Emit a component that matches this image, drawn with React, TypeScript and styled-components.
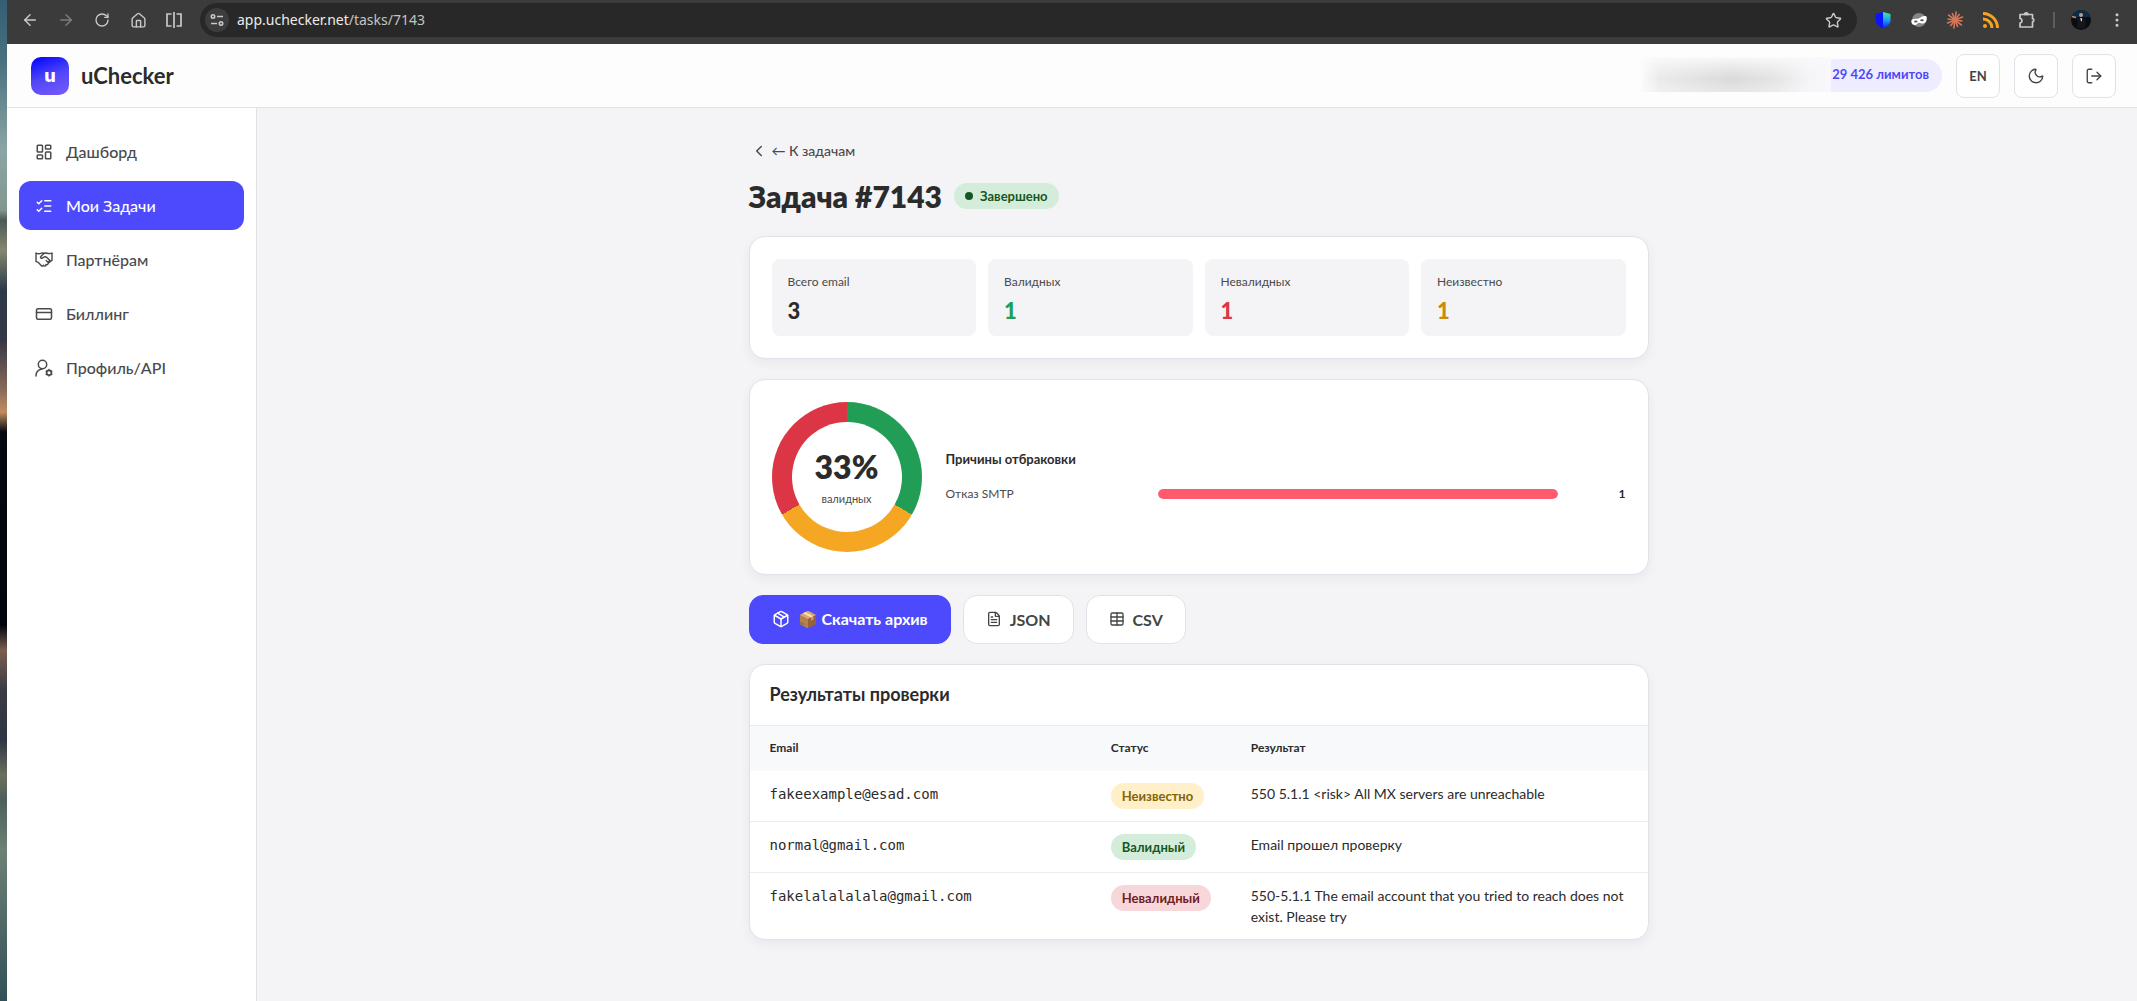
import React from "react";
import styled, { createGlobalStyle } from "styled-components";
import {
  ArrowLeft, ArrowRight, RotateCw, House, Star, EllipsisVertical, LayoutDashboard, ListChecks,
  CreditCard, ChevronLeft, Moon, Package, FileText, Table, LogOut,
} from "lucide-react";

const Global = createGlobalStyle`
  *, *::before, *::after { box-sizing: border-box; }
  body {
    margin: 0;
    background: #f4f4f7;
    color: #2b2b2b;
    font-family: Lato, "Open Sans", sans-serif;
    font-size: 16px;
  }
  h1, h2, h3, p, dl, dd, ul { margin: 0; padding: 0; }
  button, input { font-family: inherit; }
`;

const Desktop = styled.div`
  min-height: 100vh;
  display: flex;
  padding-left: 7px;
  background: linear-gradient(180deg, #335f74 0, #48707f 60px, #8ba5a5 150px, #82978f 210px, #4c5a58 220px, #84876f 250px,
    #2c3b49 290px, #343746 340px, #8a6a58 390px, #c08c5f 412px, #04090f 432px, #02050b 625px, #7a5d50 650px,
    #3b3b44 690px, #2d3642 740px, #6b6f5e 775px, #4d5f5b 800px, #6c8074 850px, #33505a 1000px) left top / 7px 100% no-repeat;
`;
const Window = styled.div`
  flex: 1;
  min-width: 0;
  display: flex;
  flex-direction: column;
`;

const Toolbar = styled.div`
  height: 44px;
  padding: 3px 8px 7px 11px;
  display: flex;
  align-items: center;
  background: #3b3b3b;
`;
const ToolButton = styled.button<{ $dim?: boolean }>`
  width: 24px;
  height: 24px;
  margin-right: 12px;
  padding: 0;
  border: 0;
  display: grid;
  place-items: center;
  background: none;
  color: ${(p) => (p.$dim ? "#7d7d7d" : "#c9c9c9")};
  &:last-child { margin-right: 0; }
`;
const AddressBar = styled.div`
  flex: 1;
  height: 34px;
  margin-left: 2px;
  margin-right: 14px;
  padding: 0 12px 0 5px;
  border-radius: 17px;
  display: flex;
  align-items: center;
  background: #282828;
`;
const SiteInfo = styled(ToolButton)`
  border-radius: 50%;
  margin-right: 8px;
  background: #3d3d3d;
`;
const Address = styled.p`
  flex: 1;
  font: 14px/20px "Noto Sans", sans-serif;
  color: #c4c4c4;
  b { font-weight: 400; color: #ececec; }
`;
const Separator = styled.span`
  width: 2px;
  height: 16px;
  margin: 0 14px 0 2px;
  background: #5d5d5d;
`;

const Header = styled.header`
  height: 64px;
  padding: 0 21px 0 24px;
  display: flex;
  align-items: center;
  border-bottom: 1px solid #e1e2e9;
  background: #fdfdfd;
`;
const Brand = styled.a`
  display: flex;
  align-items: center;
  gap: 12px;
  color: #2b2b2b;
  text-decoration: none;
  font-size: 22px;
  font-weight: 700;
  line-height: 30px;
`;
const Logo = styled.span`
  width: 38px;
  height: 38px;
  border-radius: 10px;
  display: grid;
  place-items: center;
  background: linear-gradient(160deg, #0000ff, #4f46f8 50%, #7a5cfa);
  color: #fff;
  font: 800 18px/24px Inter, sans-serif;
`;
const HeaderTools = styled.div`
  margin-left: auto;
  display: flex;
  align-items: center;
  gap: 14px;
`;
const Account = styled.div`
  display: flex;
  align-items: center;
`;
const HiddenName = styled.div`
  width: 190px;
  height: 35px;
  margin: 0 -12px 3px 0;
  position: relative;
  background:
    linear-gradient(90deg, #fbfbfb 0, rgba(250, 250, 250, 0.5) 10%, rgba(250, 250, 250, 0.3) 25%, rgba(250, 250, 250, 0) 48%,
      rgba(250, 250, 250, 0.3) 70%, rgba(249, 249, 252, 0.85) 88%, #f8f8fd 100%),
    linear-gradient(180deg, #f9f9f9, #e8e8e8 30%, #dadada 62%, #e6e6e6);
`;
const Limits = styled.span`
  height: 33px;
  padding: 0 13px;
  border-radius: 17px;
  background: #eeedff;
  color: #4f48f5;
  font-size: 13px;
  font-weight: 700;
  line-height: 31px;
`;
const SquareButton = styled.button`
  width: 44px;
  height: 44px;
  padding: 0;
  border: 1px solid #e1e2e9;
  border-radius: 8px;
  display: grid;
  place-items: center;
  background: #fff;
  color: #444;
  font-size: 13px;
  font-weight: 700;
`;

const Body = styled.div`
  flex: 1;
  display: flex;
`;
const Sidebar = styled.nav`
  width: 250px;
  flex: none;
  padding: 19px 12px;
  display: flex;
  flex-direction: column;
  gap: 5px;
  border-right: 1px solid #e1e2e9;
  background: #fff;
`;
const NavLink = styled.a<{ $active?: boolean }>`
  padding: 12px 16px;
  border-radius: 12px;
  display: flex;
  align-items: center;
  gap: 13px;
  background: ${(p) => (p.$active ? "#4d49fc" : "transparent")};
  color: ${(p) => (p.$active ? "#fff" : "#4a4a4a")};
  font-size: 16px;
  font-weight: 500;
  line-height: 25px;
  text-decoration: none;
`;

const Main = styled.main`
  flex: 1;
  min-width: 0;
  padding: 28px 28px 60px 31px;
  background: #f4f4f7;
`;
const Content = styled.div`
  max-width: 900px;
  margin: 0 auto;
  display: flex;
  flex-direction: column;
  gap: 20px;
`;
const BackLink = styled.a`
  padding-left: 1px;
  display: flex;
  align-items: center;
  gap: 4px;
  color: #4a4a4a;
  font-size: 14px;
  font-weight: 500;
  line-height: 30px;
  text-decoration: none;
`;
const TitleRow = styled.div`
  margin-top: -8px;
  padding-bottom: 2px;
  display: flex;
  align-items: center;
  gap: 12px;
`;
const Title = styled.h1`
  font-size: 30px;
  font-weight: 800;
  line-height: 36px;
`;
type Tone = "ok" | "bad" | "unknown";
const tones = {
  ok: ["#d4edda", "#155724"],
  bad: ["#f8d7da", "#721c24"],
  unknown: ["#fff0c9", "#856404"],
};
const Badge = styled.span<{ $tone: Tone }>`
  padding: 0 11px;
  border-radius: 13px;
  display: inline-flex;
  align-items: center;
  gap: 7px;
  background: ${(p) => tones[p.$tone][0]};
  color: ${(p) => tones[p.$tone][1]};
  font-size: 13px;
  font-weight: 700;
  line-height: 26px;
`;
const Dot = styled.i`
  width: 8px;
  height: 8px;
  border-radius: 50%;
  background: currentColor;
`;

const Card = styled.section`
  border: 1px solid #e1e2e9;
  border-radius: 16px;
  background: #fff;
  box-shadow: 0 4px 12px rgba(20, 20, 40, 0.05);
  overflow: hidden;
`;
const Stats = styled.dl`
  padding: 22px;
  display: grid;
  grid-template-columns: repeat(4, 1fr);
  gap: 12px;
`;
const Stat = styled.div`
  padding: 13px 16px 9px;
  border-radius: 8px;
  background: #f4f4f7;
`;
const StatLabel = styled.dt`
  color: #4a4a4a;
  font-size: 12px;
  line-height: 20px;
`;
const StatValue = styled.dd<{ $color: string }>`
  padding-top: 3px;
  color: ${(p) => p.$color};
  font-size: 22px;
  font-weight: 900;
  line-height: 32px;
`;

const Breakdown = styled.div`
  padding: 22px;
  display: flex;
  align-items: center;
  gap: 24px;
`;
const Donut = styled.div`
  width: 150px;
  height: 150px;
  flex: none;
  padding: 20px;
  border-radius: 50%;
  background: conic-gradient(#219d55 0 120deg, #f5a623 120deg 240deg, #dc3545 240deg);
`;
const DonutHole = styled.div`
  height: 100%;
  padding-bottom: 1px;
  border-radius: 50%;
  display: flex;
  flex-direction: column;
  align-items: center;
  justify-content: center;
  background: #fff;
`;
const Percent = styled.strong`
  font-size: 32px;
  font-weight: 800;
  line-height: 44px;
`;
const PercentLabel = styled.span`
  color: #4a4a4a;
  font-size: 11px;
  line-height: 20px;
`;
const Reasons = styled.div`
  flex: 1;
  min-width: 0;
  padding-bottom: 2px;
  font-size: 12px;
  line-height: 20px;
`;
const ReasonsTitle = styled.h3`
  padding-bottom: 15px;
  font-size: 13px;
  font-weight: 700;
`;
const Reason = styled.div`
  display: grid;
  grid-template-columns: 200px 1fr 56px;
  gap: 12px;
  align-items: center;
  color: #4a4a4a;
  b { color: #2b2b2b; text-align: right; }
`;
const Bar = styled.div`
  height: 10px;
  border-radius: 5px;
  background: #eee;
  overflow: hidden;
`;
const BarFill = styled.div`
  height: 100%;
  border-radius: 5px;
  background: #ff5a6e;
`;

const Actions = styled.div`
  display: flex;
  gap: 12px;
`;
const ActionButton = styled.button<{ $primary?: boolean }>`
  height: 49px;
  padding: 0 22px 1px;
  border: 1px solid ${(p) => (p.$primary ? "#4d49fc" : "#e1e2e9")};
  border-radius: 14px;
  display: flex;
  align-items: center;
  gap: 8px;
  background: ${(p) => (p.$primary ? "#4d49fc" : "#fff")};
  color: ${(p) => (p.$primary ? "#fff" : "#444")};
  font-size: 16px;
  font-weight: 700;
  white-space: nowrap;
`;

const CardTitle = styled.h2`
  padding: 14px 20px 16px;
  border-bottom: 1px solid #e9eaee;
  font-size: 18px;
  font-weight: 700;
  line-height: 30px;
`;
const Results = styled.table`
  width: 100%;
  border-collapse: collapse;
  table-layout: fixed;
  font-size: 14px;
  line-height: 21px;
  th {
    padding: 11px 20px 13px;
    background: #f8f9fb;
    font-size: 12px;
    font-weight: 700;
    text-align: left;
  }
  th:nth-child(1) { width: 38%; }
  th:nth-child(2) { width: 140px; }
  td { padding: 12px 20px; vertical-align: top; }
  tbody tr:not(:last-child) td { border-bottom: 1px solid #ececee; }
`;
const Email = styled.span`
  font-family: "DejaVu Sans Mono", monospace;
`;

const HandshakeIcon = () => (
  <svg width="18" height="18" viewBox="0 0 18 18" fill="none" stroke="currentColor" strokeWidth="1.400" strokeLinecap="round" strokeLinejoin="round">
    <path d="M1 2.200c2 1 4 .6 5.500 0 1-.4 2-.3 3 .2M17 2.200c-2.400 1-4.200.2-6-.2-1-.2-1.800 0-2.500.8L5.800 5.600c-.8.900.5 2.200 1.500 1.500l2-1.200c1-.5 1.800-.1 2.600.6l2.400 2.300c.8.900-.1 2.200-1.200 1.700" />
    <path d="M1 2.200v8.300c1.300 0 1.800.5 2.600 1.300l2.800 2.900c.9.900 1.800.4 2-.3M17 2.200v7.300c-1 .2-1.700.5-2.600 1.200" />
    <path d="M8.200 14.200c1.200 1.600 3 .8 2.800-.6M10.800 13.400c1.300.9 2.700-.2 2.300-1.500M11.200 9.600l2 2c1 .6 1.900-.3 1.600-1.200" />
  </svg>
);
const UserGearIcon = () => (
  <svg width="18" height="18" viewBox="0 0 18 18" fill="none" stroke="currentColor" strokeWidth="1.500" strokeLinecap="round">
    <circle cx="7.500" cy="5.500" r="4.200" />
    <path d="M1 17c0-3.600 2.300-6.300 6-6.900" />
    <circle cx="14" cy="13.800" r="2.400" strokeWidth="1.700" />
    <path d="M14 10.500v.4M14 16.700v.4M11.200 12.200l.3.200M16.500 15.200l.3.200M11.200 15.400l.3-.2M16.500 12.400l.3-.2" />
  </svg>
);

const nav = [
  { label: "Дашборд", icon: <LayoutDashboard size={18} /> },
  { label: "Мои Задачи", icon: <ListChecks size={18} />, active: true },
  { label: "Партнёрам", icon: <HandshakeIcon /> },
  { label: "Биллинг", icon: <CreditCard size={18} /> },
  { label: "Профиль/API", icon: <UserGearIcon /> },
];
const stats = [
  ["Всего email", "3", "#2b2b2b"],
  ["Валидных", "1", "#219d55"],
  ["Невалидных", "1", "#dc3545"],
  ["Неизвестно", "1", "#ce8b06"],
];
const rows: { email: string; tone: Tone; status: string; result: string }[] = [
  { email: "fakeexample@esad.com", tone: "unknown", status: "Неизвестно", result: "550 5.1.1 <risk> All MX servers are unreachable" },
  { email: "normal@gmail.com", tone: "ok", status: "Валидный", result: "Email прошел проверку" },
  { email: "fakelalalalala@gmail.com", tone: "bad", status: "Невалидный", result: "550-5.1.1 The email account that you tried to reach does not exist. Please try" },
];
const reasons = [{ label: "Отказ SMTP", count: 1 }];
const maxCount = Math.max(...reasons.map((r) => r.count));

const SplitIcon = () => (
  <svg width="18" height="18" viewBox="0 0 18 18" fill="none" stroke="currentColor" strokeWidth="1.700">
    <path d="M6.500 3H2v12h4.500M9 1v16M11.500 3H16v12h-4.500" />
  </svg>
);
const TuneIcon = () => (
  <svg width="14" height="14" viewBox="0 0 14 14" fill="none" stroke="currentColor" strokeWidth="1.600">
    <circle cx="3" cy="3.500" r="1.700" /><path d="M7 3.500h6M1 10.500h6" /><circle cx="11" cy="10.500" r="1.700" />
  </svg>
);
const ShieldIcon = () => (
  <svg width="16" height="18" viewBox="0 0 16 18">
    <defs><linearGradient id="shield" x1="0" y1="0" x2="0" y2="1"><stop offset="0" stopColor="#3ff09a" /><stop offset=".5" stopColor="#1b9df0" /><stop offset="1" stopColor="#0a1cff" /></linearGradient></defs>
    <path d="M8 1L.5 3v6c0 4 3.500 6.500 7.500 8.500z" fill="#0a14ff" /><path d="M8 1l7.500 2v6c0 4-3.500 6.500-7.500 8.500z" fill="url(#shield)" />
  </svg>
);
const MaskIcon = () => (
  <svg width="18" height="18" viewBox="0 0 18 18">
    <circle cx="9" cy="9" r="7" fill="#858585" />
    <path d="M1.500 9C4 7 7 8.500 9.500 7S14 4.500 16.500 5.500c1 3-.5 7-3.500 7-2 0-2.500-.8-4-.8s-2 2.300-4.500 2.300c-2.800-.2-3.500-3-3-5z" fill="#fff" />
    <ellipse cx="5.800" cy="10.500" rx="1.800" ry="1" fill="#555" /><ellipse cx="12" cy="9.300" rx="1.800" ry="1" fill="#555" />
  </svg>
);
const BurstIcon = () => (
  <svg width="18" height="18" viewBox="-9 -9 18 18" stroke="#d97757" strokeWidth="1.600">
    {Array.from({ length: 12 }, (_, i) => (
      <path key={i} d={i % 2 ? "M0 0V-7.500" : "M0 0V-8.700"} transform={`rotate(${i * 30 + 8})`} />
    ))}
  </svg>
);
const FeedIcon = () => (
  <svg width="16" height="16" viewBox="0 0 16 16" fill="none" stroke="#f7a11e" strokeWidth="3">
    <path d="M0 1.500A14.500 14.500 0 0 1 14.500 16M0 7A9 9 0 0 1 9 16" /><circle cx="2" cy="14" r="2" fill="#f7a11e" stroke="none" />
  </svg>
);
const PuzzleIcon = () => (
  <svg width="18" height="18" viewBox="0 0 18 18" fill="none" stroke="currentColor" strokeWidth="1.700" strokeLinejoin="round">
    <path d="M2 3.500h12.500v4.200c1.700 0 1.700 3.100 0 3.100V16H2v-4c2.600 0 2.600-4.500 0-4.500z" /><path d="M6.500 3.500c0-2.300 3.500-2.300 3.500 0z" fill="currentColor" />
  </svg>
);
const Avatar = () => (
  <svg width="20" height="20" viewBox="0 0 20 20">
    <defs><clipPath id="face"><circle cx="10" cy="10" r="10" /></clipPath></defs>
    <g clipPath="url(#face)">
      <path d="M0 0h20v20H0z" fill="#0a0c10" /><path d="M0 0h20v7H0z" fill="#0d2c4c" />
      <path d="M1 6l7 1.500 4 .5 3 3-1 7H6L7 10 1 8z" fill="#16171b" /><circle cx="10" cy="5" r="2" fill="#c59b84" />
      <path d="M1 6.500l4 1" stroke="#b98e79" strokeWidth="1.300" /><path d="M9.300 8h1.500l.2 3-1 .5z" fill="#dfe4ea" />
    </g>
  </svg>
);

export default function App() {
  return (
    <Desktop>
      <Global />
      <Window>
        <Toolbar>
          <ToolButton aria-label="Back"><ArrowLeft size={18} /></ToolButton>
          <ToolButton aria-label="Forward" $dim><ArrowRight size={18} /></ToolButton>
          <ToolButton aria-label="Reload"><RotateCw size={16} /></ToolButton>
          <ToolButton aria-label="Home"><House size={17} /></ToolButton>
          <ToolButton aria-label="Split view"><SplitIcon /></ToolButton>
          <AddressBar>
            <SiteInfo aria-label="Site information"><TuneIcon /></SiteInfo>
            <Address><b>app.uchecker.net</b>/tasks/7143</Address>
            <ToolButton aria-label="Bookmark"><Star size={17} /></ToolButton>
          </AddressBar>
          <ToolButton aria-label="Shield"><ShieldIcon /></ToolButton>
          <ToolButton aria-label="Mask"><MaskIcon /></ToolButton>
          <ToolButton aria-label="Assistant"><BurstIcon /></ToolButton>
          <ToolButton aria-label="Feed"><FeedIcon /></ToolButton>
          <ToolButton aria-label="Extensions"><PuzzleIcon /></ToolButton>
          <Separator />
          <ToolButton aria-label="Profile"><Avatar /></ToolButton>
          <ToolButton aria-label="Menu"><EllipsisVertical size={18} /></ToolButton>
        </Toolbar>

        <Header>
          <Brand href="#"><Logo>u</Logo>uChecker</Brand>
          <HeaderTools>
            <Account><HiddenName /><Limits>29 426 лимитов</Limits></Account>
            <SquareButton>EN</SquareButton>
            <SquareButton aria-label="Тема"><Moon size={18} strokeWidth={1.8} /></SquareButton>
            <SquareButton aria-label="Выйти"><LogOut size={18} strokeWidth={1.8} /></SquareButton>
          </HeaderTools>
        </Header>

        <Body>
          <Sidebar>
            {nav.map((n) => (
              <NavLink key={n.label} href="#" $active={n.active}>{n.icon}{n.label}</NavLink>
            ))}
          </Sidebar>
          <Main>
            <Content>
              <BackLink href="#"><ChevronLeft size={18} />← К задачам</BackLink>
              <TitleRow>
                <Title>Задача #7143</Title>
                <Badge $tone="ok"><Dot />Завершено</Badge>
              </TitleRow>
              <Card>
                <Stats>
                  {stats.map(([label, value, color]) => (
                    <Stat key={label}><StatLabel>{label}</StatLabel><StatValue $color={color}>{value}</StatValue></Stat>
                  ))}
                </Stats>
              </Card>
              <Card>
                <Breakdown>
                  <Donut><DonutHole><Percent>33%</Percent><PercentLabel>валидных</PercentLabel></DonutHole></Donut>
                  <Reasons>
                    <ReasonsTitle>Причины отбраковки</ReasonsTitle>
                    {reasons.map((r) => (
                      <Reason key={r.label}>
                        <span>{r.label}</span>
                        <Bar><BarFill style={{ width: `${(r.count / maxCount) * 100}%` }} /></Bar>
                        <b>{r.count}</b>
                      </Reason>
                    ))}
                  </Reasons>
                </Breakdown>
              </Card>
              <Actions>
                <ActionButton $primary><Package size={18} />📦 Скачать архив</ActionButton>
                <ActionButton><FileText size={16} />JSON</ActionButton>
                <ActionButton><Table size={16} />CSV</ActionButton>
              </Actions>
              <Card>
                <CardTitle>Результаты проверки</CardTitle>
                <Results>
                  <thead><tr><th>Email</th><th>Статус</th><th>Результат</th></tr></thead>
                  <tbody>
                    {rows.map((r) => (
                      <tr key={r.email}>
                        <td><Email>{r.email}</Email></td>
                        <td><Badge $tone={r.tone}>{r.status}</Badge></td>
                        <td>{r.result}</td>
                      </tr>
                    ))}
                  </tbody>
                </Results>
              </Card>
            </Content>
          </Main>
        </Body>
      </Window>
    </Desktop>
  );
}
